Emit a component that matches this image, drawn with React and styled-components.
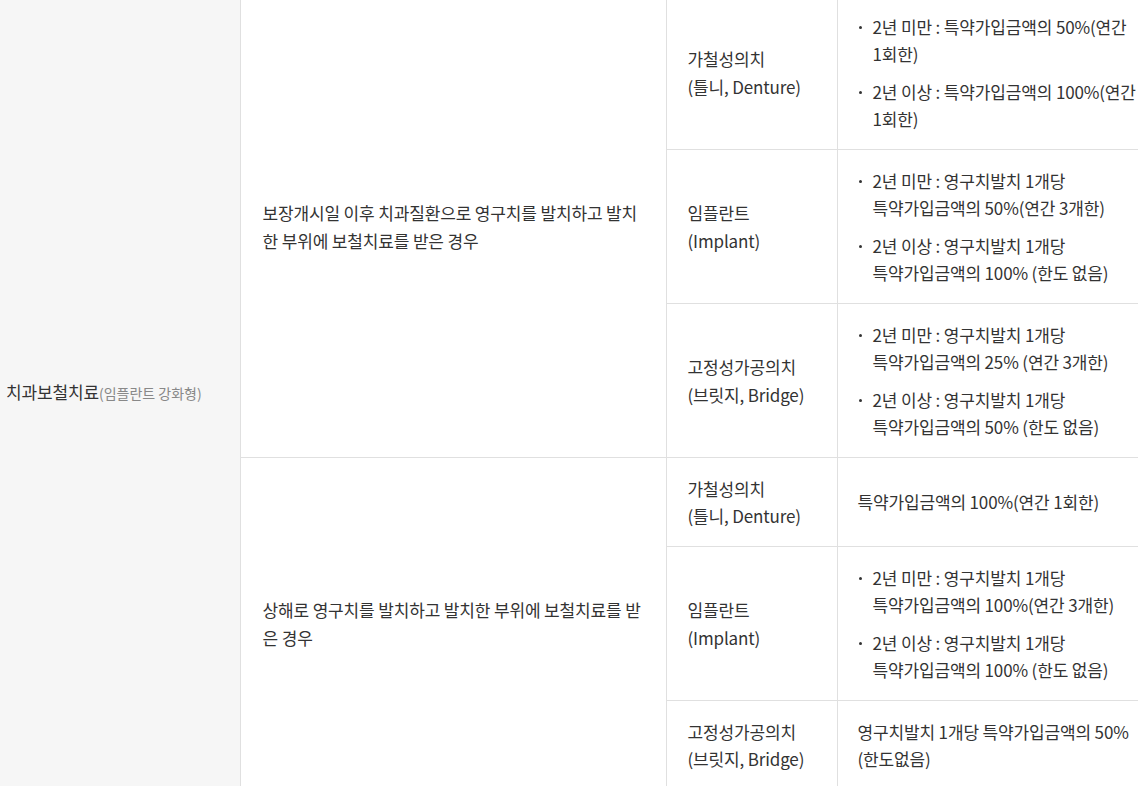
import React from "react";
import styled, { createGlobalStyle } from "styled-components";

const GlobalStyle = createGlobalStyle`
  html, body {
    margin: 0;
    padding: 0;
    background: #fff;
    overflow: hidden;
  }
  body {
    font-family: "Noto Sans CJK KR", "Noto Sans", sans-serif;
    color: #333;
  }
`;

const Table = styled.table`
  width: 1138px;
  margin-top: -5px;
  border-collapse: collapse;
  table-layout: fixed;
  font-size: 17px;
  line-height: 27.5px;
  letter-spacing: -0.15px;
  color: #333;
`;

const Cell = styled.td`
  border: 1px solid #e0e0e0;
  padding: 16.5px 22px;
  vertical-align: middle;
  text-align: left;
  word-break: break-all;
`;

const HeadCell = styled(Cell)`
  background: #f6f6f6;
  padding: 0 6px;
  border-left: none;
  white-space: nowrap;
`;

const Sub = styled.span`
  font-size: 14px;
  color: #888;
  letter-spacing: 0;
`;

const TypeCell = styled(Cell)`
  padding: 16.5px 21px;
`;

const PayCell = styled(Cell)`
  padding: 16.5px 0 16.5px 20px;
  border-right: none;
  white-space: nowrap;
`;

const List = styled.ul`
  list-style: none;
  margin: 0;
  padding: 0;
  display: flex;
  flex-direction: column;
  gap: 10px;
`;

const Item = styled.li`
  position: relative;
  padding-left: 15px;

  &::before {
    content: "";
    position: absolute;
    left: 1px;
    top: 13px;
    width: 3px;
    height: 3px;
    border-radius: 50%;
    background: #333;
  }
`;

const rows = [
  {
    group: 0,
    type: ["가철성의치", "(틀니, Denture)"],
    pay: [
      ["2년 미만 : 특약가입금액의 50%(연간", "1회한)"],
      ["2년 이상 : 특약가입금액의 100%(연간", "1회한)"],
    ],
  },
  {
    group: 0,
    type: ["임플란트", "(Implant)"],
    pay: [
      ["2년 미만 : 영구치발치 1개당", "특약가입금액의 50%(연간 3개한)"],
      ["2년 이상 : 영구치발치 1개당", "특약가입금액의 100% (한도 없음)"],
    ],
  },
  {
    group: 0,
    type: ["고정성가공의치", "(브릿지, Bridge)"],
    pay: [
      ["2년 미만 : 영구치발치 1개당", "특약가입금액의 25% (연간 3개한)"],
      ["2년 이상 : 영구치발치 1개당", "특약가입금액의 50% (한도 없음)"],
    ],
  },
  {
    group: 1,
    type: ["가철성의치", "(틀니, Denture)"],
    text: ["특약가입금액의 100%(연간 1회한)"],
  },
  {
    group: 1,
    type: ["임플란트", "(Implant)"],
    pay: [
      ["2년 미만 : 영구치발치 1개당", "특약가입금액의 100%(연간 3개한)"],
      ["2년 이상 : 영구치발치 1개당", "특약가입금액의 100% (한도 없음)"],
    ],
  },
  {
    group: 1,
    type: ["고정성가공의치", "(브릿지, Bridge)"],
    text: ["영구치발치 1개당 특약가입금액의 50%", "(한도없음)"],
  },
];

const cases = [
  "보장개시일 이후 치과질환으로 영구치를 발치하고 발치한 부위에 보철치료를 받은 경우",
  "상해로 영구치를 발치하고 발치한 부위에 보철치료를 받은 경우",
];

function Lines({ lines }) {
  return lines.map((l, i) => (
    <React.Fragment key={i}>
      {i > 0 && <br />}
      {l}
    </React.Fragment>
  ));
}

export default function App() {
  return (
    <>
      <GlobalStyle />
      <Table>
        <colgroup>
          <col style={{ width: 240 }} />
          <col style={{ width: 426 }} />
          <col style={{ width: 171 }} />
          <col />
        </colgroup>
        <tbody>
          {rows.map((r, i) => (
            <tr key={i}>
              {i === 0 && (
                <HeadCell rowSpan={6}>
                  치과보철치료<Sub>(임플란트 강화형)</Sub>
                </HeadCell>
              )}
              {i % 3 === 0 && <Cell rowSpan={3}>{cases[r.group]}</Cell>}
              <TypeCell>
                <Lines lines={r.type} />
              </TypeCell>
              <PayCell>
                {r.pay ? (
                  <List>
                    {r.pay.map((p, j) => (
                      <Item key={j}>
                        <Lines lines={p} />
                      </Item>
                    ))}
                  </List>
                ) : (
                  <Lines lines={r.text} />
                )}
              </PayCell>
            </tr>
          ))}
        </tbody>
      </Table>
    </>
  );
}
